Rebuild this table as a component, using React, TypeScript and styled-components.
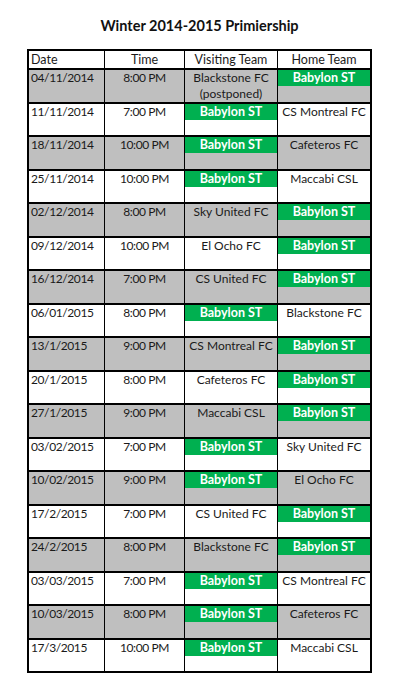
import * as React from 'react';
import styled, { createGlobalStyle } from 'styled-components';

const GlobalStyle = createGlobalStyle`
  body {
    margin: 0;
    background: #ffffff;
    font-family: Lato, "Liberation Sans", Arial, sans-serif;
    color: #1a1a1a;
  }
`;

const Page = styled.div`
  display: flex;
  flex-direction: column;
  align-items: flex-start;
  width: 400px;
  padding: 17px 0 0 27px;
  box-sizing: border-box;
`;

const Title = styled.h1`
  width: 345px;
  margin: 0 0 15px;
  font-size: 14.5px;
  font-weight: 700;
  line-height: 17px;
  text-align: center;
  color: #111;
`;

const Table = styled.div`
  width: 345px;
  border: 2px solid #000;
  box-sizing: border-box;
`;

const Row = styled.div<{ $shaded?: boolean; $header?: boolean }>`
  display: grid;
  grid-template-columns: 75px 80px 93px 93px;
  height: ${({ $header }) => ($header ? '17px' : '31.5px')};
  background: ${({ $shaded }) => ($shaded ? '#bfbfbf' : '#ffffff')};
  border-bottom: 2px solid #000;

  &:last-child { border-bottom: none; }
`;

const Cell = styled.div<{ $align?: 'left' | 'center'; $numeric?: boolean }>`
  box-sizing: border-box;
  padding: ${({ $align }) => ($align === 'left' ? '0 0 0 2px' : '0')};
  font-size: 12px;
  line-height: 16px;
  letter-spacing: ${({ $numeric }) => ($numeric ? '-0.4px' : '0')};
  text-align: ${({ $align }) => $align || 'center'};
  white-space: nowrap;

  & + & { border-left: 1px solid #000; }
`;

const HeaderCell = styled(Cell)`
  line-height: 17px;
  font-size: 12.5px;
`;

const Highlight = styled.div`
  height: 16px;
  background: #00b050;
  color: #ffffff;
  font-size: 12.5px;
  font-weight: 700;
  line-height: 16px;
`;

type Match = [string, string, string, string];

const HOME = 'Babylon ST';

const matches: Match[] = [
  ['04/11/2014', '8:00 PM', 'Blackstone FC\n(postponed)', HOME],
  ['11/11/2014', '7:00 PM', HOME, 'CS Montreal FC'],
  ['18/11/2014', '10:00 PM', HOME, 'Cafeteros FC'],
  ['25/11/2014', '10:00 PM', HOME, 'Maccabi CSL'],
  ['02/12/2014', '8:00 PM', 'Sky United FC', HOME],
  ['09/12/2014', '10:00 PM', 'El Ocho FC', HOME],
  ['16/12/2014', '7:00 PM', 'CS United FC', HOME],
  ['06/01/2015', '8:00 PM', HOME, 'Blackstone FC'],
  ['13/1/2015', '9:00 PM', 'CS Montreal FC', HOME],
  ['20/1/2015', '8:00 PM', 'Cafeteros FC', HOME],
  ['27/1/2015', '9:00 PM', 'Maccabi CSL', HOME],
  ['03/02/2015', '7:00 PM', HOME, 'Sky United FC'],
  ['10/02/2015', '9:00 PM', HOME, 'El Ocho FC'],
  ['17/2/2015', '7:00 PM', 'CS United FC', HOME],
  ['24/2/2015', '8:00 PM', 'Blackstone FC', HOME],
  ['03/03/2015', '7:00 PM', HOME, 'CS Montreal FC'],
  ['10/03/2015', '8:00 PM', HOME, 'Cafeteros FC'],
  ['17/3/2015', '10:00 PM', HOME, 'Maccabi CSL'],
];

const Team: React.FC<{ name: string }> = ({ name }) => {
  if (name === HOME) return <Highlight>{name}</Highlight>;
  return (
    <>
      {name.split('\n').map(line => (
        <div key={line}>{line}</div>
      ))}
    </>
  );
};

export default function App() {
  return (
    <Page>
      <GlobalStyle />
      <Title>Winter 2014-2015 Primiership</Title>

      <Table>
        <Row $header>
          <HeaderCell $align="left">Date</HeaderCell>
          <HeaderCell>Time</HeaderCell>
          <HeaderCell>Visiting Team</HeaderCell>
          <HeaderCell>Home Team</HeaderCell>
        </Row>

        {matches.map(([date, time, visiting, home], i) => (
          <Row key={date} $shaded={i % 2 === 0}>
            <Cell $align="left" $numeric>{date}</Cell>
            <Cell $numeric>{time}</Cell>
            <Cell><Team name={visiting} /></Cell>
            <Cell><Team name={home} /></Cell>
          </Row>
        ))}
      </Table>
    </Page>
  );
}
